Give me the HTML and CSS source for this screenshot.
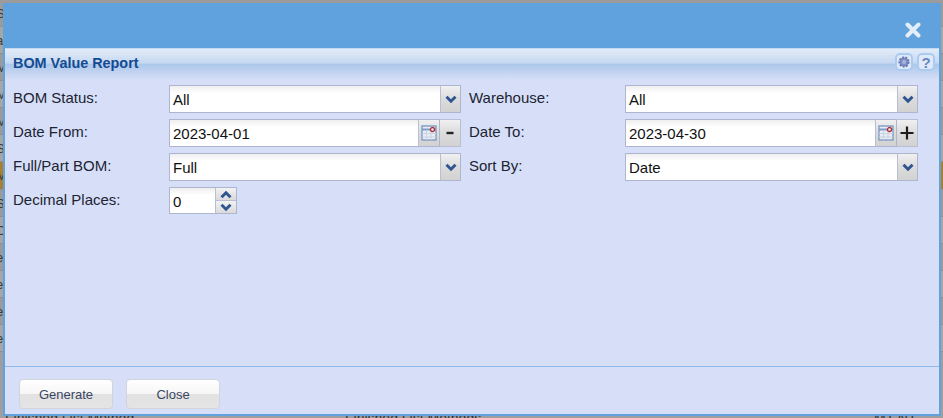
FILE: index.html
```html
<!DOCTYPE html>
<html lang="en">
<head>
<meta charset="utf-8">
<title>BOM Value Report</title>
<link rel="stylesheet" href="styles.css">
</head>
<body>
<div class="backdrop">
  <div class="bg-row"><span>S</span></div>
  <div class="bg-row alt"><span>a</span></div>
  <div class="bg-row"><span>M</span></div>
  <div class="bg-row alt"><span>M</span></div>
  <div class="bg-row"><span>M</span></div>
  <div class="bg-row alt"><span>S</span></div>
  <div class="bg-row orange"><span>M</span></div>
  <div class="bg-row"><span>S</span></div>
  <div class="bg-row alt"><span>C</span></div>
  <div class="bg-row"><span>e</span></div>
  <div class="bg-row alt"><span>e</span></div>
  <div class="bg-row"><span>e</span></div>
  <div class="bg-row alt"><span>e</span></div>
  <div class="bg-bottom"><span class="b1">Finished List Method</span><span class="b2">Finished List Methods</span><span class="b3">MT NT</span></div>
</div>
<div class="dialog">
  <div class="dialog-head">
    <svg class="close" width="16" height="16" viewBox="0 0 16 16"><path d="M2.5 2.5 13.5 13.5M13.5 2.5 2.5 13.5" stroke="#e4eef9" stroke-width="4" stroke-linecap="round"/></svg>
  </div>
  <div class="panel">
    <div class="title-bar">
      <span class="title">BOM Value Report</span>
      <div class="tools">
        <span class="tool"><svg width="14" height="14" viewBox="0 0 14 14"><circle cx="7" cy="7" r="4.6" fill="#7f8fc4" stroke="#6778b4" stroke-width="2" stroke-dasharray="2 1.2"/><circle cx="7" cy="7" r="2" fill="#a9b5dc"/></svg></span>
        <span class="tool q">?</span>
      </div>
    </div>
    <div class="form">
      <label class="lbl">BOM Status:</label>
      <div class="field"><span class="val">All</span><span class="btn"><svg class="chev" viewBox="0 0 12 8"><path d="M2 1.5 6 5.5 10 1.5" /></svg></span></div>
      <label class="lbl">Warehouse:</label>
      <div class="field"><span class="val">All</span><span class="btn"><svg class="chev" viewBox="0 0 12 8"><path d="M2 1.5 6 5.5 10 1.5" /></svg></span></div>

      <label class="lbl">Date From:</label>
      <div class="date-wrap">
        <div class="field"><span class="val">2023-04-01</span><span class="btn cal"><svg width="16" height="16" viewBox="0 0 16 16"><rect x="1" y="1" width="14" height="14" fill="#e8ecf4" stroke="#7f9cc4" stroke-width="1.4"/><path d="M1 4.5H15" stroke="#7f9cc4" stroke-width="2"/><path d="M5.5 5V15M10 5V15M1 8.5H15M1 12H15" stroke="#c9d2e2"/><circle cx="11.5" cy="4.5" r="2" fill="#f5eeee" stroke="#b0303a" stroke-width="1.3"/></svg></span></div>
        <span class="btn step"><svg width="12" height="12" viewBox="0 0 12 12"><path d="M2.5 6H9.5" stroke="#222" stroke-width="2.4"/></svg></span>
      </div>
      <label class="lbl">Date To:</label>
      <div class="date-wrap">
        <div class="field"><span class="val">2023-04-30</span><span class="btn cal"><svg width="16" height="16" viewBox="0 0 16 16"><rect x="1" y="1" width="14" height="14" fill="#e8ecf4" stroke="#7f9cc4" stroke-width="1.4"/><path d="M1 4.5H15" stroke="#7f9cc4" stroke-width="2"/><path d="M5.5 5V15M10 5V15M1 8.5H15M1 12H15" stroke="#c9d2e2"/><circle cx="11.5" cy="4.5" r="2" fill="#f5eeee" stroke="#b0303a" stroke-width="1.3"/></svg></span></div>
        <span class="btn step"><svg width="14" height="14" viewBox="0 0 14 14"><path d="M0.5 7H13.5M7 0.5V13.5" stroke="#1c1c1c" stroke-width="2.2"/></svg></span>
      </div>

      <label class="lbl">Full/Part BOM:</label>
      <div class="field"><span class="val">Full</span><span class="btn"><svg class="chev" viewBox="0 0 12 8"><path d="M2 1.5 6 5.5 10 1.5" /></svg></span></div>
      <label class="lbl">Sort By:</label>
      <div class="field"><span class="val">Date</span><span class="btn"><svg class="chev" viewBox="0 0 12 8"><path d="M2 1.5 6 5.5 10 1.5" /></svg></span></div>

      <label class="lbl">Decimal Places:</label>
      <div class="spinner">
        <span class="val">0</span>
        <span class="spin-btns">
          <span class="spin"><svg class="chev" viewBox="0 0 12 8"><path d="M2 6.5 6 2.5 10 6.5" /></svg></span>
          <span class="spin"><svg class="chev" viewBox="0 0 12 8"><path d="M2 1.5 6 5.5 10 1.5" /></svg></span>
        </span>
      </div>
    </div>
    <div class="footer">
      <button class="action" type="button">Generate</button>
      <button class="action" type="button">Close</button>
    </div>
  </div>
</div>
</body>
</html>
```
FILE: styles.css
```css
html, body {
  margin: 0;
  padding: 0;
  width: 943px;
  height: 418px;
  overflow: hidden;
  background: #9e9e9e;
  font-family: "Liberation Sans", Arial, sans-serif;
}

/* dimmed page behind the modal */
.backdrop {
  position: absolute;
  inset: 0;
  display: flex;
  flex-direction: column;
  color: #3c3c3c;
  font-size: 13px;
}
.bg-row {
  height: 27px;
  flex: none;
  background: #9b9b9b;
  border-bottom: 1px solid #8f8f8f;
  box-sizing: border-box;
  padding: 6px 0 0 0;
  line-height: 15px;
  position: relative;
}
.bg-row span { position: absolute; left: -4px; }
.bg-row.alt { background: #a6a6a6; }
.bg-row.orange { background: #a9802f; height: 28px; }
.bg-bottom {
  position: absolute;
  top: 411px;
  left: 0;
  right: 0;
  font-size: 14px;
  color: #333;
  line-height: 14px;
}
.bg-bottom span { position: absolute; top: 0; white-space: nowrap; }
.b1 { left: 5px; }
.b2 { left: 345px; }
.b3 { left: 874px; }

/* modal */
.dialog {
  position: absolute;
  left: 3px;
  top: 3px;
  width: 938px;
  height: 413px;
  display: flex;
  flex-direction: column;
  background: #5fa2de;
}
.dialog-head {
  height: 45px;
  flex: none;
  display: flex;
  justify-content: flex-end;
  align-items: flex-start;
  padding: 19px 20px 0 0;
  box-sizing: border-box;
}
.panel {
  flex: 1;
  margin: 0 2px 2px 2px;
  background: #d6dff7;
  display: flex;
  flex-direction: column;
  border-top: 1px solid #c2daf3;
  min-height: 0;
}
.title-bar {
  height: 31px;
  flex: none;
  box-sizing: border-box;
  padding: 0 4px 0 8px;
  display: flex;
  align-items: flex-start;
  justify-content: space-between;
  background: linear-gradient(to bottom, #e2ecf9 0, #c6d8f1 45%, #adc8ea 50%, #d6dff7 100%);
}
.title {
  font-size: 14.4px;
  font-weight: bold;
  color: #134b92;
  line-height: 16px;
  margin-top: 6px;
}
.tools { display: flex; gap: 4px; margin-top: 4px; }
.tool {
  width: 14px;
  height: 14px;
  border: 2px solid #a8cbef;
  border-radius: 5px;
  background: #dfe9f9;
  display: flex;
  align-items: center;
  justify-content: center;
}
.tool.q {
  font-size: 15px;
  font-weight: bold;
  color: #6a86bd;
}

.form {
  display: grid;
  grid-template-columns: 156px 300px 156px 293px;
  row-gap: 6px;
  grid-auto-rows: 28px;
  padding: 5px 0 0 8px;
  flex: 1;
  align-content: start;
}
.lbl {
  font-size: 15px;
  color: #1c2433;
  line-height: 17px;
  padding-top: 4px;
}
.field {
  flex: 1;
  min-width: 0;
  height: 28px;
  box-sizing: border-box;
  border: 1px solid #aeb6cf;
  background: linear-gradient(to bottom, #eeeeee 0, #ffffff 7px);
  display: flex;
  align-items: stretch;
}
.form > .field,
.form > .date-wrap { margin-right: 8px; }
.form > :nth-child(4n) { margin-right: 0; }
.val {
  flex: 1;
  font-size: 15px;
  color: #111;
  line-height: 28px;
  padding-left: 3px;
}
.btn {
  width: 20px;
  flex: none;
  box-sizing: border-box;
  border-left: 1px solid #b9bfd2;
  background: linear-gradient(to bottom, #f0f0f0 0, #dcdcdc 50%, #d2d2d2 100%);
  display: flex;
  align-items: center;
  justify-content: center;
}
.btn.cal { width: 21px; }
.chev { width: 14px; height: 9px; fill: none; stroke: #2f5590; stroke-width: 2.6; }
.date-wrap { display: flex; }
.btn.step {
  width: 21px;
  height: 28px;
  border: 1px solid #b9bfd2;
  border-left: none;
}
.spinner {
  width: 68px;
  height: 27px;
  box-sizing: border-box;
  border: 1px solid #aeb6cf;
  display: flex;
  background: linear-gradient(to bottom, #eeeeee 0, #ffffff 7px);
}
.spinner .val { line-height: 27px; }
.spin-btns {
  width: 20px;
  flex: none;
  display: flex;
  flex-direction: column;
  border-left: 1px solid #b9bfd2;
}
.spin {
  flex: 1;
  background: linear-gradient(to bottom, #f2f2f2, #dadada);
  display: flex;
  align-items: center;
  justify-content: center;
}
.spin + .spin { border-top: 1px solid #b9bfd2; }

.footer {
  height: 48px;
  flex: none;
  box-sizing: border-box;
  border-top: 1px solid #8dbcea;
  padding: 12px 0 0 14px;
  display: flex;
  gap: 13px;
  align-items: flex-start;
}
.action {
  width: 94px;
  height: 30px;
  border: 1px solid #d2d4dc;
  border-radius: 4px;
  background: linear-gradient(to bottom, #ffffff 0, #f6f6f6 50%, #e2e2e2 50%, #e4e4e4 100%);
  font-family: "Liberation Sans", Arial, sans-serif;
  font-size: 13px;
  color: #3a4660;
  padding: 0;
}
```
